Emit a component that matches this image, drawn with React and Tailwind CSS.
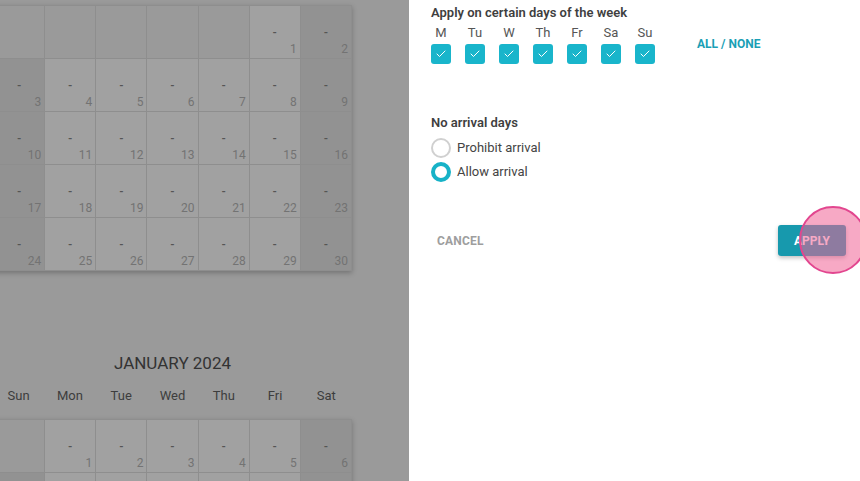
import { Check } from 'lucide-react';

const DAYS = ['M', 'Tu', 'W', 'Th', 'Fr', 'Sa', 'Su'];
const WEEK = ['Sun', 'Mon', 'Tue', 'Wed', 'Thu', 'Fri', 'Sat'];

// build rows of day numbers, null = empty slot
function buildRows(offset, count, maxRows) {
  const slots = [];
  for (let i = 0; i < offset; i++) slots.push(null);
  for (let d = 1; d <= count; d++) slots.push(d);
  const rows = [];
  for (let i = 0; i < slots.length; i += 7) rows.push(slots.slice(i, i + 7));
  return rows.slice(0, maxRows);
}

function DayCell({ day, col, bare }) {
  if (day === null) {
    return <div className="h-[53px] border-r border-b border-[#8e8e8e] bg-[#9a9a9a]" />;
  }
  const weekend = col === 0 || col === 6;
  return (
    <div
      className={`flex h-[53px] flex-col border-r border-b border-[#8e8e8e] ${
        weekend ? 'bg-[#929292]' : 'bg-[#a1a1a1]'
      }`}
    >
      {!bare && (
        <>
          <div className="mt-[20px] text-center text-[11px] font-bold leading-[14px] text-[#555]">-</div>
          <div className="mt-auto pr-[3px] pb-[2px] text-right text-[12px] leading-[14px] text-[#737373]">
            {day}
          </div>
        </>
      )}
    </div>
  );
}

// rows past `visibleRows` sit below the fold, so their labels are left out
function MonthGrid({ rows, visibleRows = 99 }) {
  return (
    <div className="grid grid-cols-7 border-t border-l border-[#8e8e8e] shadow-[0_2px_5px_rgba(0,0,0,0.25)]">
      {rows.map((row, r) =>
        Array.from({ length: 7 }).map((_, c) => (
          <DayCell key={`${r}-${c}`} day={row[c] ?? null} col={c} bare={r >= visibleRows} />
        ))
      )}
    </div>
  );
}

function Calendars() {
  const dec = buildRows(5, 30, 5);
  const jan = buildRows(1, 31, 2);
  return (
    <div className="ml-[-7px] mt-[5px] w-[359px]">
      <MonthGrid rows={dec} />

      <div className="mt-[80px] text-center text-[17px] leading-[24px] text-[#333]">JANUARY 2024</div>
      <div className="mt-[12px] grid grid-cols-7 text-center text-[13px] leading-[18px] text-[#3d3d3d]">
        {WEEK.map((w) => (
          <div key={w}>{w}</div>
        ))}
      </div>
      <div className="mt-[14px]">
        <MonthGrid rows={jan} visibleRows={1} />
      </div>
    </div>
  );
}

function Radio({ checked, label }) {
  return (
    <div className="flex h-[24px] items-center gap-[6px]">
      <span
        className={`h-[20px] w-[20px] rounded-full bg-white ${
          checked ? 'border-[4px] border-[#17b2c7]' : 'border-2 border-[#d0d0d0]'
        }`}
      />
      <span className="text-[13px] text-[#444]">{label}</span>
    </div>
  );
}

export default function App() {
  return (
    <div className="flex h-[481px] w-[860px] overflow-hidden font-['Roboto',sans-serif]">
      {/* dimmed calendar behind the drawer */}
      <div className="w-[409px] shrink-0 overflow-hidden bg-[#9a9a9a]">
        <Calendars />
      </div>

      {/* drawer */}
      <div className="relative flex-1 bg-white pl-[22px] pr-[14px]">
        <div className="mt-[5px] text-[13px] font-semibold leading-[16px] text-[#3f3f3f]">
          Apply on certain days of the week
        </div>
        <div className="mt-[4px] flex items-end">
          <div className="flex gap-[14px]">
            {DAYS.map((d) => (
              <div key={d} className="flex w-[20px] flex-col items-center">
                <span className="text-[13px] leading-[16px] text-[#555]">{d}</span>
                <span className="mt-[3px] flex h-[20px] w-[20px] items-center justify-center rounded-[3px] bg-[#19b5cb]">
                  <Check className="h-[12px] w-[12px] text-white" strokeWidth={2} />
                </span>
              </div>
            ))}
          </div>
          <button className="mb-[12px] ml-[42px] text-[12px] font-bold leading-[16px] text-[#1a9fb5]">
            ALL / NONE
          </button>
        </div>

        <div className="mt-[51px] text-[13px] font-semibold leading-[16px] text-[#3f3f3f]">No arrival days</div>
        <div className="mt-[5px]">
          <Radio label="Prohibit arrival" />
          <Radio checked label="Allow arrival" />
        </div>

        <div className="mt-[41px] flex items-center justify-between">
          <button className="ml-[6px] text-[12px] font-bold tracking-[0.2px] text-[#9e9e9e]">CANCEL</button>
          <button className="h-[31px] w-[68px] rounded-[3px] bg-[#1799ad] text-[12px] font-bold text-white shadow-[0_2px_4px_rgba(0,0,0,0.25)]">
            APPLY
          </button>
        </div>

        {/* click indicator */}
        <div className="absolute left-[390px] top-[206px] h-[68px] w-[68px] rounded-full border-2 border-[#e2468f] bg-[rgba(240,98,150,0.55)]" />
      </div>
    </div>
  );
}
